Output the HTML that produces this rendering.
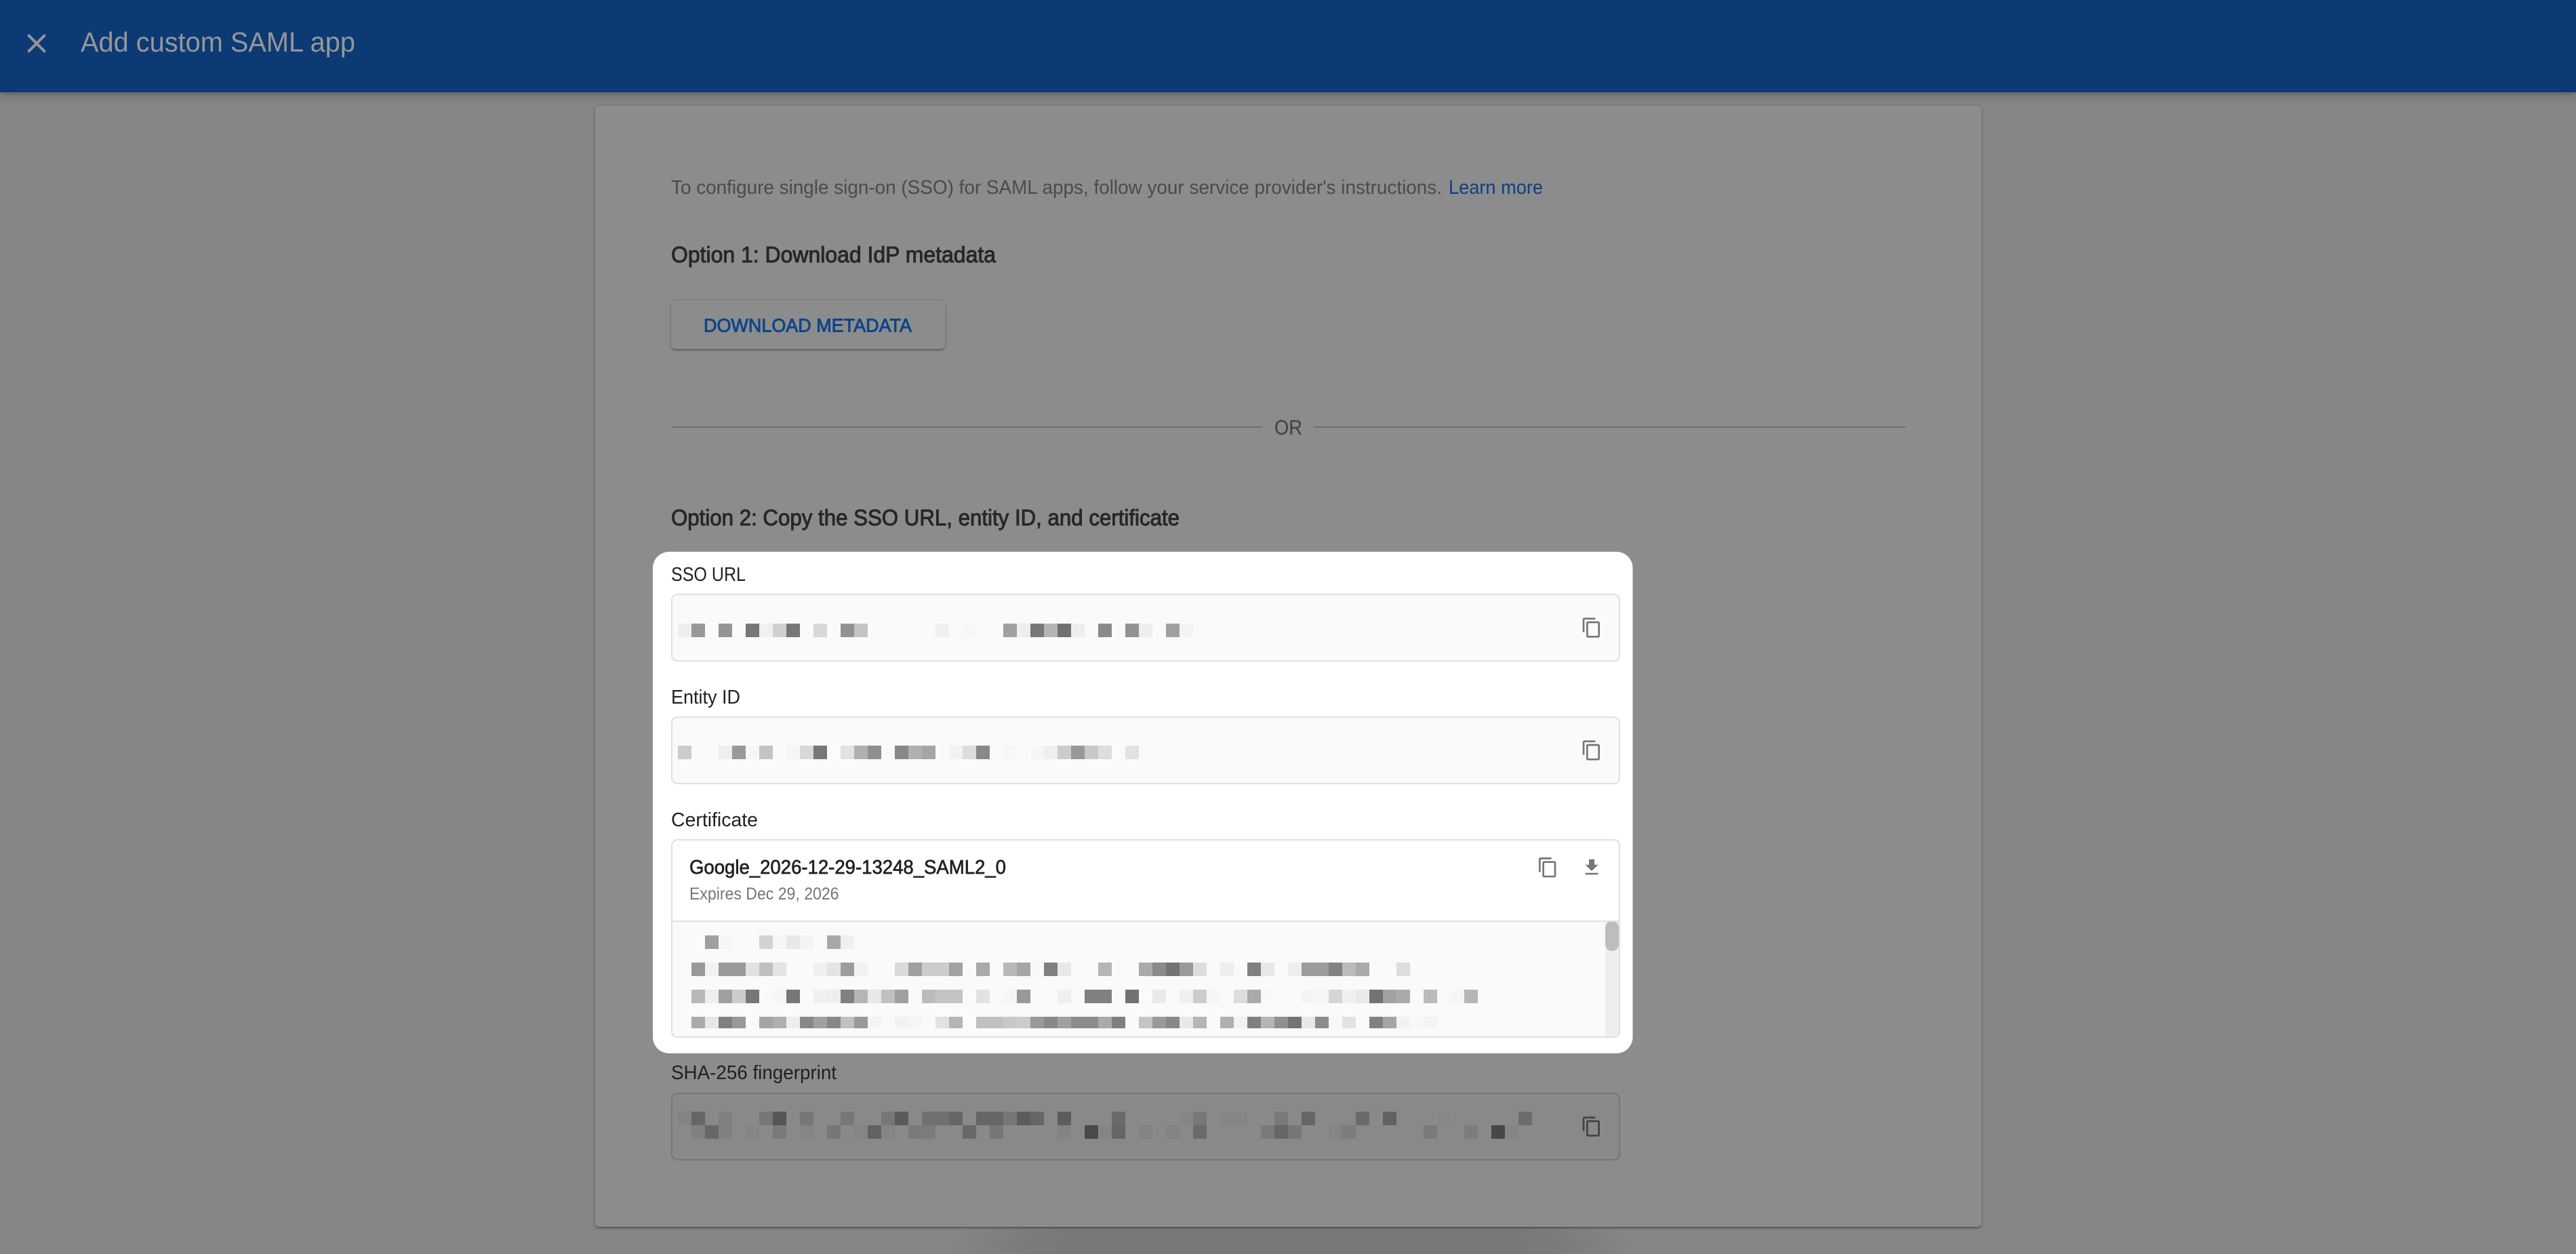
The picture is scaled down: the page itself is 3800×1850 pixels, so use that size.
<!DOCTYPE html>
<html><head><meta charset="utf-8"><title>Add custom SAML app</title>
<style>
html,body{margin:0;padding:0;width:3800px;height:1850px;overflow:hidden;background:#858585}
#wrap{position:relative;width:3800px;height:1850px;overflow:hidden;background:#858585}
#blob{position:absolute;left:1400px;top:1780px;width:1010px;height:70px;background:radial-gradient(505px 100px at 50% 90%,rgba(0,0,0,.1) 0%,rgba(0,0,0,.085) 75%,rgba(0,0,0,0) 100%)}
#head{position:absolute;left:0;top:0;width:3800px;height:136px;background:#0c3a75;box-shadow:0 2px 8px rgba(0,0,0,.25),0 4px 16px rgba(0,0,0,.12)}
#card{position:absolute;left:878px;top:156px;width:2045px;height:1654px;background:#8c8c8c;border-radius:6px;box-shadow:0 2px 2px rgba(0,0,0,.2),0 3px 1px -2px rgba(0,0,0,.14),0 1px 5px rgba(0,0,0,.2)}
#btn{position:absolute;left:990px;top:443px;width:404px;height:72px;background:#8c8c8c;border-radius:6px;box-shadow:0 2px 2px rgba(0,0,0,.14),0 3px 1px -2px rgba(0,0,0,.2),0 1px 5px rgba(0,0,0,.2)}
svg{position:absolute;left:0;top:0}
text{font-family:"Liberation Sans",sans-serif}
.p rect{width:1px;height:1px}
.p{shape-rendering:crispEdges}
</style></head><body>
<div id="wrap">
<div id="blob"></div>
<div id="head"></div>
<div id="card"></div>
<div id="btn"></div>
<svg width="3800" height="1850" viewBox="0 0 3800 1850" xmlns="http://www.w3.org/2000/svg">
<defs>
<path id="cp" d="M16 1H4c-1.1 0-2 .9-2 2v14h2V3h12V1zm3 4H8c-1.1 0-2 .9-2 2v14c0 1.1.9 2 2 2h11c1.1 0 2-.9 2-2V7c0-1.1-.9-2-2-2zm0 16H8V7h11v14z"/>
</defs>
<path transform="translate(30 40) scale(2)" fill="#949494" d="M19 6.41L17.59 5 12 10.59 6.41 5 5 6.41 10.59 12 5 17.59 6.41 19 12 13.41 17.59 19 19 17.59 13.41 12z"/>
<text x="119" y="76" font-size="41" fill="#969798" textLength="405" lengthAdjust="spacingAndGlyphs">Add custom SAML app</text>

<text x="990" y="286" font-size="29" fill="#4b4b4c" textLength="1137" lengthAdjust="spacingAndGlyphs">To configure single sign-on (SSO) for SAML apps, follow your service provider's instructions.</text>
<text x="2137" y="286" font-size="29" fill="#0c3f80" textLength="139" lengthAdjust="spacingAndGlyphs">Learn more</text>
<text x="990" y="387" font-size="33" fill="#272727" stroke="#272727" stroke-width="1" textLength="479" lengthAdjust="spacingAndGlyphs">Option 1: Download IdP metadata</text>
<text x="1038" y="489.5" font-size="28" fill="#0c4488" stroke="#0c4488" stroke-width=".9" textLength="307" lengthAdjust="spacingAndGlyphs">DOWNLOAD METADATA</text>
<rect x="990" y="629" width="872" height="2" fill="#6e6e6e"/>
<rect x="1938" y="629" width="873" height="2" fill="#6e6e6e"/>
<text x="1880" y="641" font-size="31" fill="#484848" stroke="#484848" stroke-width=".4" textLength="41" lengthAdjust="spacingAndGlyphs">OR</text>
<text x="990" y="775" font-size="33" fill="#272727" stroke="#272727" stroke-width="1" textLength="750" lengthAdjust="spacingAndGlyphs">Option 2: Copy the SSO URL, entity ID, and certificate</text>

<rect x="963" y="814" width="1445.5" height="740" rx="24" fill="#fff"/>

<text x="990" y="857" font-size="29" fill="#202124" textLength="110" lengthAdjust="spacingAndGlyphs">SSO URL</text>
<rect x="991" y="877" width="1398" height="98" rx="8" fill="#fafafa" stroke="#e0e0e0" stroke-width="2"/>
<g class="p" transform="translate(1000 920) scale(20)">
<rect x="0" fill="#eeeeee"/><rect x="1" fill="#989898"/><rect x="3" fill="#959595"/><rect x="5" fill="#777777"/><rect x="6" fill="#f0f0f0"/><rect x="7" fill="#d0d0d0"/><rect x="8" fill="#777777"/><rect x="10" fill="#d8d8d8"/><rect x="12" fill="#929292"/><rect x="13" fill="#c4c4c4"/><rect x="19" fill="#f0f0f0"/><rect x="21" fill="#f7f7f7"/><rect x="24" fill="#a0a0a0"/><rect x="25" fill="#eeeeee"/><rect x="26" fill="#777777"/><rect x="27" fill="#b5b5b5"/><rect x="28" fill="#707070"/><rect x="29" fill="#eeeeee"/><rect x="31" fill="#8a8a8a"/><rect x="33" fill="#929292"/><rect x="34" fill="#eeeeee"/><rect x="36" fill="#a0a0a0"/><rect x="37" fill="#f4f4f4"/>
</g>
<use href="#cp" transform="translate(2332 910) scale(1.333)" fill="#757575"/>

<text x="990" y="1038" font-size="29" fill="#202124" textLength="102" lengthAdjust="spacingAndGlyphs">Entity ID</text>
<rect x="991" y="1058" width="1398" height="98" rx="8" fill="#fafafa" stroke="#e0e0e0" stroke-width="2"/>
<g class="p" transform="translate(1000 1100) scale(20)">
<rect x="0" fill="#cccccc"/><rect x="3" fill="#eeeeee"/><rect x="4" fill="#999999"/><rect x="5" fill="#f6f6f6"/><rect x="6" fill="#c4c4c4"/><rect x="8" fill="#f5f5f5"/><rect x="9" fill="#d8d8d8"/><rect x="10" fill="#777777"/><rect x="12" fill="#e2e2e2"/><rect x="13" fill="#b0b0b0"/><rect x="14" fill="#8f8f8f"/><rect x="16" fill="#888888"/><rect x="17" fill="#b0b0b0"/><rect x="18" fill="#a5a5a5"/><rect x="20" fill="#f2f2f2"/><rect x="21" fill="#dddddd"/><rect x="22" fill="#888888"/><rect x="24" fill="#f7f7f7"/><rect x="26" fill="#f6f6f6"/><rect x="27" fill="#eeeeee"/><rect x="28" fill="#cccccc"/><rect x="29" fill="#999999"/><rect x="30" fill="#c8c8c8"/><rect x="31" fill="#dddddd"/><rect x="33" fill="#e2e2e2"/>
</g>
<use href="#cp" transform="translate(2332 1091) scale(1.333)" fill="#757575"/>

<text x="990" y="1219" font-size="29" fill="#202124" textLength="128" lengthAdjust="spacingAndGlyphs">Certificate</text>
<rect x="991" y="1239" width="1398" height="291" rx="8" fill="#fff"/>
<path d="M991 1359H2389V1522a8 8 0 0 1-8 8H999a8 8 0 0 1-8-8z" fill="#fafafa"/>
<path d="M2368 1359H2389V1522a8 8 0 0 1-8 8H2368z" fill="#eeeeee"/>
<rect x="2368" y="1359" width="20" height="44" rx="10" fill="#bdbdbd"/>
<rect x="991" y="1358" width="1398" height="2" fill="#e0e0e0"/>
<rect x="991" y="1239" width="1398" height="291" rx="8" fill="none" stroke="#e0e0e0" stroke-width="2"/>
<text x="1017" y="1289" font-size="29" fill="#202124" stroke="#202124" stroke-width=".7" textLength="467" lengthAdjust="spacingAndGlyphs">Google_2026-12-29-13248_SAML2_0</text>
<text x="1017" y="1327" font-size="25" fill="#757575" textLength="220.500" lengthAdjust="spacingAndGlyphs">Expires Dec 29, 2026</text>
<use href="#cp" transform="translate(2267.300 1263.700) scale(1.333)" fill="#757575"/>
<path transform="translate(2332 1263.700) scale(1.333)" fill="#757575" d="M19 9h-4V3H9v6H5l7 7 7-7zM5 18v2h14v-2H5z"/>

<g class="p" transform="translate(1020 1380) scale(20)">
<rect x="1" fill="#a0a0a0"/><rect x="2" fill="#f6f6f6"/><rect x="5" fill="#d2d2d2"/><rect x="6" fill="#f6f6f6"/><rect x="7" fill="#e8e8e8"/><rect x="8" fill="#f4f4f4"/><rect x="10" fill="#a8a8a8"/><rect x="11" fill="#f0f0f0"/>
</g>
<g class="p" transform="translate(1020 1420) scale(20)">
<rect x="0" fill="#999999"/><rect x="1" fill="#f2f2f2"/><rect x="2" fill="#999999"/><rect x="3" fill="#999999"/><rect x="4" fill="#e2e2e2"/><rect x="5" fill="#c0c0c0"/><rect x="6" fill="#e4e4e4"/><rect x="9" fill="#f0f0f0"/><rect x="10" fill="#e4e4e4"/><rect x="11" fill="#9c9c9c"/><rect x="12" fill="#f2f2f2"/><rect x="15" fill="#dadada"/><rect x="16" fill="#a0a0a0"/><rect x="17" fill="#cccccc"/><rect x="18" fill="#cccccc"/><rect x="19" fill="#a2a2a2"/><rect x="21" fill="#aaaaaa"/><rect x="23" fill="#b8b8b8"/><rect x="24" fill="#a5a5a5"/><rect x="25" fill="#f8f8f8"/><rect x="26" fill="#808080"/><rect x="27" fill="#e8e8e8"/><rect x="30" fill="#b5b5b5"/><rect x="33" fill="#aaaaaa"/><rect x="34" fill="#8a8a8a"/><rect x="35" fill="#737373"/><rect x="36" fill="#999999"/><rect x="37" fill="#dddddd"/><rect x="39" fill="#eeeeee"/><rect x="41" fill="#808080"/><rect x="42" fill="#e8e8e8"/><rect x="44" fill="#eeeeee"/><rect x="45" fill="#9c9c9c"/><rect x="46" fill="#9c9c9c"/><rect x="47" fill="#828282"/><rect x="48" fill="#bbbbbb"/><rect x="49" fill="#aaaaaa"/><rect x="52" fill="#dddddd"/>
</g>
<g class="p" transform="translate(1020 1460) scale(20)">
<rect x="0" fill="#b8b8b8"/><rect x="1" fill="#eeeeee"/><rect x="2" fill="#a0a0a0"/><rect x="3" fill="#cccccc"/><rect x="4" fill="#777777"/><rect x="6" fill="#f6f6f6"/><rect x="7" fill="#777777"/><rect x="9" fill="#f0f0f0"/><rect x="10" fill="#eeeeee"/><rect x="11" fill="#808080"/><rect x="12" fill="#b5b5b5"/><rect x="13" fill="#e8e8e8"/><rect x="14" fill="#c0c0c0"/><rect x="15" fill="#a0a0a0"/><rect x="17" fill="#bbbbbb"/><rect x="18" fill="#c4c4c4"/><rect x="19" fill="#c4c4c4"/><rect x="21" fill="#e2e2e2"/><rect x="23" fill="#f6f6f6"/><rect x="24" fill="#999999"/><rect x="27" fill="#f0f0f0"/><rect x="29" fill="#808080"/><rect x="30" fill="#808080"/><rect x="32" fill="#737373"/><rect x="34" fill="#eaeaea"/><rect x="36" fill="#f0f0f0"/><rect x="37" fill="#cccccc"/><rect x="38" fill="#f6f6f6"/><rect x="40" fill="#dddddd"/><rect x="41" fill="#aaaaaa"/><rect x="42" fill="#f8f8f8"/><rect x="45" fill="#f4f4f4"/><rect x="46" fill="#f6f6f6"/><rect x="47" fill="#d5d5d5"/><rect x="48" fill="#f0f0f0"/><rect x="49" fill="#eaeaea"/><rect x="50" fill="#737373"/><rect x="51" fill="#a2a2a2"/><rect x="52" fill="#aaaaaa"/><rect x="54" fill="#bbbbbb"/><rect x="56" fill="#f6f6f6"/><rect x="57" fill="#b5b5b5"/>
</g>
<g class="p" transform="translate(1020 1500) scale(20 17)">
<rect x="0" fill="#aaaaaa"/><rect x="1" fill="#e8e8e8"/><rect x="2" fill="#808080"/><rect x="3" fill="#999999"/><rect x="5" fill="#a5a5a5"/><rect x="6" fill="#b0b0b0"/><rect x="7" fill="#eeeeee"/><rect x="8" fill="#888888"/><rect x="9" fill="#a0a0a0"/><rect x="10" fill="#888888"/><rect x="11" fill="#c0c0c0"/><rect x="12" fill="#999999"/><rect x="13" fill="#f4f4f4"/><rect x="15" fill="#f2f2f2"/><rect x="16" fill="#f6f6f6"/><rect x="18" fill="#e2e2e2"/><rect x="19" fill="#b5b5b5"/><rect x="21" fill="#c0c0c0"/><rect x="22" fill="#c0c0c0"/><rect x="23" fill="#c8c8c8"/><rect x="24" fill="#cccccc"/><rect x="25" fill="#999999"/><rect x="26" fill="#888888"/><rect x="27" fill="#a0a0a0"/><rect x="28" fill="#8c8c8c"/><rect x="29" fill="#8c8c8c"/><rect x="30" fill="#aaaaaa"/><rect x="31" fill="#808080"/><rect x="33" fill="#c4c4c4"/><rect x="34" fill="#999999"/><rect x="35" fill="#888888"/><rect x="36" fill="#e8e8e8"/><rect x="37" fill="#b5b5b5"/><rect x="39" fill="#b0b0b0"/><rect x="40" fill="#f2f2f2"/><rect x="41" fill="#808080"/><rect x="42" fill="#b5b5b5"/><rect x="43" fill="#909090"/><rect x="44" fill="#737373"/><rect x="45" fill="#e8e8e8"/><rect x="46" fill="#8c8c8c"/><rect x="47" fill="#f8f8f8"/><rect x="48" fill="#e2e2e2"/><rect x="50" fill="#808080"/><rect x="51" fill="#a5a5a5"/><rect x="52" fill="#f2f2f2"/><rect x="53" fill="#f8f8f8"/><rect x="54" fill="#f4f4f4"/>
</g>

<text x="990" y="1592" font-size="29" fill="#202020" textLength="244" lengthAdjust="spacingAndGlyphs">SHA-256 fingerprint</text>
<rect x="991" y="1613" width="1398" height="98" rx="8" fill="#898989" stroke="#767676" stroke-width="2"/>
<g class="p" transform="translate(1000 1640) scale(20)">
<rect x="0" fill="#838383"/><rect x="1" fill="#666666"/><rect x="3" fill="#808080"/><rect x="6" fill="#777777"/><rect x="7" fill="#555555"/><rect x="9" fill="#777777"/><rect x="12" fill="#777777"/><rect x="15" fill="#777777"/><rect x="16" fill="#5a5a5a"/><rect x="18" fill="#707070"/><rect x="19" fill="#707070"/><rect x="20" fill="#666666"/><rect x="22" fill="#666666"/><rect x="23" fill="#666666"/><rect x="24" fill="#777777"/><rect x="25" fill="#5c5c5c"/><rect x="26" fill="#666666"/><rect x="28" fill="#5c5c5c"/><rect x="32" fill="#6a6a6a"/><rect x="37" fill="#858585"/><rect x="38" fill="#777777"/><rect x="40" fill="#858585"/><rect x="41" fill="#858585"/><rect x="44" fill="#7a7a7a"/><rect x="46" fill="#666666"/><rect x="50" fill="#6a6a6a"/><rect x="52" fill="#626262"/><rect x="56" fill="#878787"/><rect x="62" fill="#6c6c6c"/>
</g>
<g class="p" transform="translate(1000 1660) scale(20)">
<rect x="1" fill="#808080"/><rect x="2" fill="#666666"/><rect x="3" fill="#808080"/><rect x="5" fill="#858585"/><rect x="7" fill="#7a7a7a"/><rect x="9" fill="#858585"/><rect x="11" fill="#777777"/><rect x="13" fill="#858585"/><rect x="14" fill="#626262"/><rect x="15" fill="#858585"/><rect x="17" fill="#7a7a7a"/><rect x="18" fill="#7c7c7c"/><rect x="21" fill="#686868"/><rect x="23" fill="#777777"/><rect x="28" fill="#838383"/><rect x="30" fill="#4a4a4a"/><rect x="31" fill="#858585"/><rect x="32" fill="#666666"/><rect x="34" fill="#838383"/><rect x="36" fill="#838383"/><rect x="38" fill="#6a6a6a"/><rect x="43" fill="#7a7a7a"/><rect x="44" fill="#666666"/><rect x="45" fill="#777777"/><rect x="48" fill="#858585"/><rect x="49" fill="#7c7c7c"/><rect x="55" fill="#7a7a7a"/><rect x="58" fill="#7c7c7c"/><rect x="60" fill="#474747"/><rect x="61" fill="#858585"/>
</g>
<use href="#cp" transform="translate(2332 1646) scale(1.333)" fill="#424242"/>
</svg>
</div>
</body></html>
